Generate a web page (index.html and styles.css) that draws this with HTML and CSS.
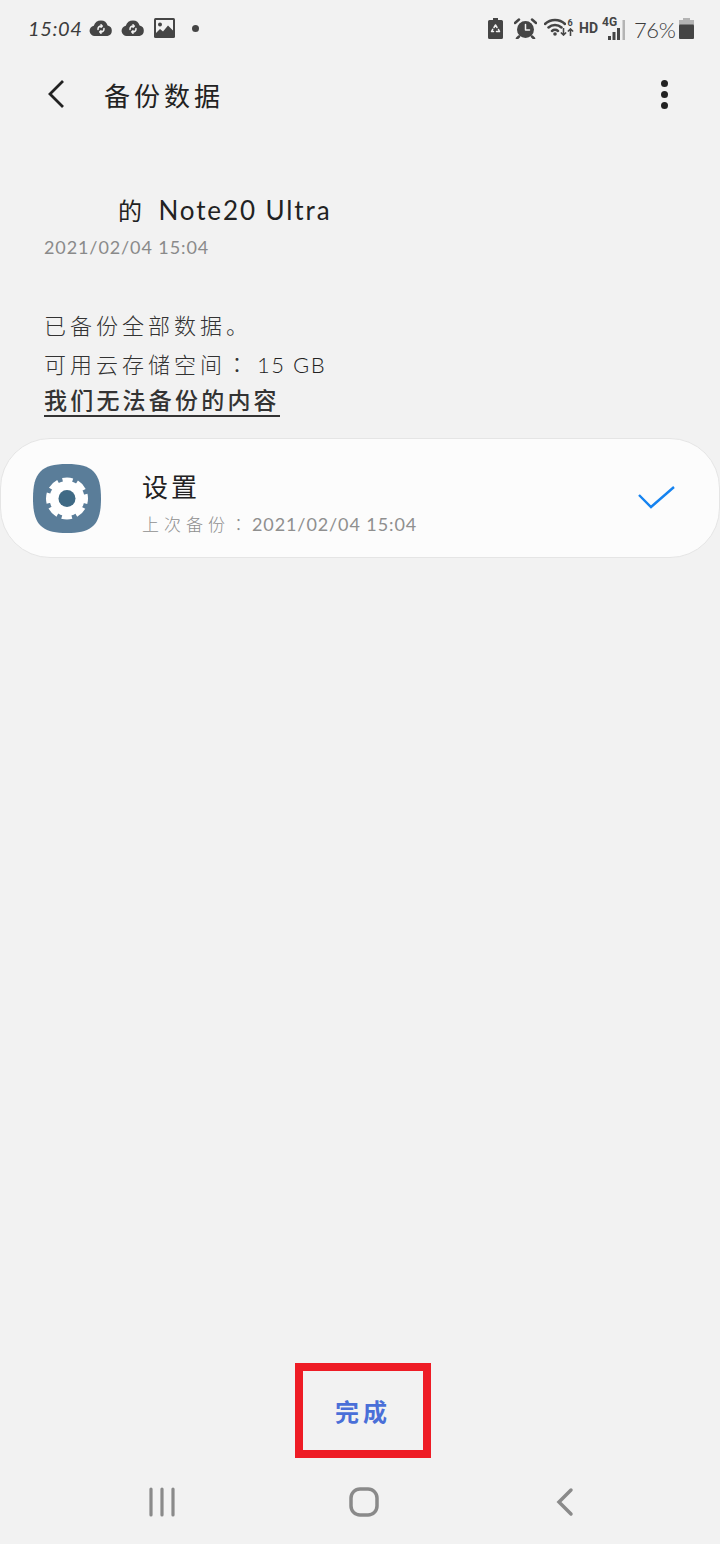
FILE: index.html
```html
<!DOCTYPE html>
<html lang="zh-CN">
<head>
<meta charset="utf-8">
<title>备份数据</title>
<link rel="stylesheet" href="styles.css">
</head>
<body>
<div class="screen">
  <header class="status">
    <div class="status-left">
      <span class="time">15:04</span>
      <svg class="ic-cloud" viewBox="0 0 24 16"><path class="f" d="M6 16a5.200 5.200 0 0 1-1.200-10.300A7.600 7.600 0 0 1 12 .4a7 7 0 0 1 6.600 5.200A5.300 5.300 0 0 1 18.500 16z"/><path class="w" d="M9 9.500a3 3 0 0 1 3.500-3.400M15 8.500a3 3 0 0 1-3.500 3.400M12 4.800l1.200 1.300-1.200 1.200M12 13.200l-1.200-1.300 1.200-1.200"/></svg>
      <svg class="ic-cloud" viewBox="0 0 24 16"><path class="f" d="M6 16a5.200 5.200 0 0 1-1.200-10.300A7.600 7.600 0 0 1 12 .4a7 7 0 0 1 6.600 5.200A5.300 5.300 0 0 1 18.500 16z"/><path class="w" d="M9 9.500a3 3 0 0 1 3.500-3.400M15 8.500a3 3 0 0 1-3.500 3.400M12 4.800l1.200 1.300-1.200 1.200M12 13.200l-1.200-1.300 1.200-1.200"/></svg>
      <svg class="ic-image" viewBox="0 0 21 20"><rect class="f" width="21" height="20" rx="1.500"/><rect class="bg" x="2" y="2" width="17" height="16"/><circle class="f" cx="6" cy="6.500" r="2"/><path class="f" d="M2 18v-3l4-4 3 2.500 5-6 5 5V18z"/></svg>
      <span class="dot"></span>
    </div>
    <div class="status-right">
      <svg class="ic-saver" viewBox="0 0 15 21"><path class="f" d="M5 0h5v2h3.500A1.500 1.500 0 0 1 15 3.500v16a1.500 1.500 0 0 1-1.500 1.500h-12A1.500 1.500 0 0 1 0 19.500v-16A1.500 1.500 0 0 1 1.500 2H5z"/><path class="w" d="M6 9.500l1.500-2.500 1.500 2.500M10.500 11.500l1 2h-3M5.500 13.500h-2l1.200-2.200"/></svg>
      <svg class="ic-alarm" viewBox="0 0 23 21"><circle class="f" cx="11.500" cy="11.500" r="8.500"/><path class="s" d="M1 5l4-3.500M22 5l-4-3.500M5 18.500l-2 2M18 18.500l2 2"/><path class="w" d="M11.500 6.500v5.500h4"/></svg>
      <div class="wifi">
        <svg class="ic-wifi" viewBox="0 0 22 19"><path class="s" d="M1 7a14.500 14.500 0 0 1 20 0M4.500 10.500a9.500 9.500 0 0 1 13 0M8 14a4.500 4.500 0 0 1 6 0"/><circle class="f" cx="11" cy="17" r="1.800"/></svg>
        <div class="wifi-side">
          <span class="wifi-num">6</span>
          <svg class="ic-arrows" viewBox="0 0 16 9"><path class="s2" d="M4 0v8M1 5l3 3 3-3M12 9V1M9 4l3-3 3 3"/></svg>
        </div>
      </div>
      <span class="hd">HD</span>
      <div class="net">
        <span class="net-label">4G</span>
        <svg class="ic-signal" viewBox="0 0 20 20"><path class="bars" d="M2 16h3v4H2zM6.500 12h3v8h-3zM11 8h3v12h-3z"/><rect class="bar-off" x="16.500" y="0" width="2.500" height="20"/></svg>
      </div>
      <span class="battery-text">76%</span>
      <svg class="ic-battery" viewBox="0 0 15 21"><rect class="off" x="4" width="7" height="3"/><rect class="off" y="2" width="15" height="5"/><rect class="f" y="6.500" width="15" height="14.500" rx="1"/></svg>
    </div>
  </header>

  <nav class="appbar">
    <svg class="ic-back" viewBox="0 0 18 30"><path d="M16 2 3 15l13 13"/></svg>
    <h1 class="title">备份数据</h1>
    <span class="more"><i></i><i></i><i></i></span>
  </nav>

  <section class="device">
    <div class="device-name"><span class="device-of">的</span> Note20 Ultra</div>
    <div class="device-date">2021/02/04 15:04</div>
  </section>

  <section class="info">
    <p class="info-line">已备份全部数据。</p>
    <p class="info-line">可用云存储空间<span class="tc" lang="zh-Hant">：</span><span class="amount">15 GB</span></p>
    <p class="info-link">我们无法备份的内容</p>
  </section>

  <section class="card">
    <svg class="app-icon" viewBox="0 0 68 69">
      <path class="squircle" d="M34 0C60 0 68 9 68 34.500 68 60 60 69 34 69 8 69 0 60 0 34.500 0 9 8 0 34 0z"/>
      <circle class="gear" cx="34" cy="34.500" r="17.500"/>
      <circle class="teeth" cx="34" cy="34.500" r="18.500"/>
      <circle class="hub" cx="34" cy="34.500" r="8.500"/>
    </svg>
    <div class="card-text">
      <div class="card-title">设置</div>
      <div class="card-sub"><span class="card-sub-label">上次备份<span class="tc" lang="zh-Hant">：</span></span>2021/02/04 15:04</div>
    </div>
    <svg class="ic-check" viewBox="0 0 38 25"><path d="M1 9l12 12L36 1"/></svg>
  </section>

  <div class="spacer"></div>

  <div class="done-row"><button class="done">完成</button></div>

  <footer class="navbar">
    <svg class="ic-recent" viewBox="0 0 26 30"><path d="M2 2v26M13 2v26M24 2v26"/></svg>
    <svg class="ic-home" viewBox="0 0 30 30"><rect x="2" y="2" width="26" height="26" rx="9"/></svg>
    <svg class="ic-navback" viewBox="0 0 18 30"><path d="M15 3 3 15l12 12"/></svg>
  </footer>
</div>
</body>
</html>
```
FILE: styles.css
```css
* { box-sizing: border-box; }
html, body { margin: 0; padding: 0; }
body {
  background: #f2f2f2;
  color: #222;
  font-family: "Lato", "Noto Sans CJK SC", sans-serif;
}
.screen { height: 1544px; display: flex; flex-direction: column; overflow: hidden; }
.tc { font-family: "Noto Sans CJK TC", sans-serif; }

.f { fill: #454545; }
.w { fill: none; stroke: #f2f2f2; stroke-width: 1.500; stroke-linecap: round; stroke-linejoin: round; }
.s { fill: none; stroke: #454545; stroke-width: 2.500; stroke-linecap: round; }
.s2 { fill: none; stroke: #454545; stroke-width: 1.800; }
.bg { fill: #f2f2f2; }
.off { fill: #b4b4b4; }

.status { height: 58px; padding: 0 26px 2px 28px; display: flex; justify-content: space-between; align-items: center; }
.status-left, .status-right { display: flex; align-items: center; }
.time { width: 52px; margin-right: 9px; font-size: 20px; font-style: italic; letter-spacing: 0.600px; color: #3c3c3c; }
.ic-cloud { width: 24px; height: 16px; margin-right: 8px; }
.ic-image { width: 21px; height: 20px; margin: 0 17px 0 1px; }
.dot { width: 7px; height: 7px; border-radius: 50%; background: #454545; }

.ic-saver { width: 15px; height: 21px; margin-right: 11px; }
.ic-alarm { width: 23px; height: 21px; margin-right: 7px; }
.wifi { display: flex; align-items: flex-end; width: 30px; height: 20px; margin: 0 5px 5px 0; }
.ic-wifi { width: 22px; height: 19px; }
.wifi-side { width: 8px; display: flex; flex-direction: column; align-items: center; }
.wifi-num { font: 700 9px/10px "Roboto", sans-serif; color: #454545; }
.ic-arrows { width: 14px; height: 8px; margin-left: -6px; flex: none; }
.hd { width: 18px; margin-right: 5px; font: 700 14px/1 "Roboto", sans-serif; color: #454545; }
.net { position: relative; width: 24px; height: 24px; margin-right: 8px; }
.net-label { position: absolute; left: 0; top: 0; font: 700 12px/12px "Roboto", sans-serif; color: #454545; }
.ic-signal { position: absolute; right: 0; bottom: 0; width: 20px; height: 20px; }
.bars { fill: #454545; }
.bar-off { fill: #b4b4b4; }
.battery-text { width: 42px; margin: 3px 3px 0 0; font-size: 22px; font-weight: 300; letter-spacing: -0.400px; color: #3c3c3c; white-space: nowrap; }
.ic-battery { width: 15px; height: 21px; }

.appbar { height: 72px; padding: 0 49px 0 47px; display: flex; align-items: center; }
.ic-back { width: 18px; height: 30px; fill: none; stroke: #222; stroke-width: 2.800; margin-right: 39px; flex: none; }
.title { margin: 0; flex: 1; font-size: 26px; font-weight: 400; letter-spacing: 4px; color: #222; }
.more { width: 14px; display: flex; flex-direction: column; align-items: center; gap: 4px; }
.more i { width: 7px; height: 7px; border-radius: 50%; background: #222; }

.device { padding: 60px 0 0 44px; }
.device-name { padding-left: 74px; font-size: 26px; line-height: 40px; letter-spacing: 1.900px; color: #222; white-space: nowrap; }
.device-of { font-size: 24px; margin-right: 6px; }
.device-date { margin-top: 3px; font-size: 18px; line-height: 26px; letter-spacing: 0.900px; color: #8a8a8a; }

.info { padding: 47px 0 0 44px; }
.info-line { margin: 0; font-size: 22px; line-height: 37.500px; letter-spacing: 4px; font-weight: 300; color: #333; }
.amount { margin-left: 5px; font-weight: 300; letter-spacing: 1.500px; color: #222; }
.info-link { display: inline-block; margin: 2px 0 0; font-size: 23px; line-height: 30px; letter-spacing: 3.200px; font-weight: 500; color: #333; border-bottom: 2px solid #333; }

.card {
  margin-top: 21px; height: 120px; padding: 0 43px 0 32px;
  display: flex; align-items: center;
  background: #fcfcfc; border: 1px solid #e5e5e5; border-radius: 50px;
}
.app-icon { width: 68px; height: 69px; margin-right: 41px; flex: none; }
.squircle { fill: #5a7d99; }
.gear { fill: #fff; }
.teeth { fill: none; stroke: #fff; stroke-width: 5; stroke-dasharray: 10 4.530; stroke-dashoffset: 5; }
.hub { fill: #3f6a85; }
.card-text { flex: 1; padding-top: 9px; }
.card-title { font-size: 26px; line-height: 36px; letter-spacing: 3px; color: #222; }
.card-sub { margin-top: 7px; font-size: 18px; line-height: 24px; letter-spacing: 0.900px; color: #8f8f8f; }
.card-sub-label { font-size: 17px; letter-spacing: 5px; font-weight: 300; }
.ic-check { width: 38px; height: 25px; fill: none; stroke: #1583f0; stroke-width: 2.400; flex: none; }

.spacer { flex: 1; }
.done-row { display: flex; justify-content: center; }
.done {
  width: 136px; height: 95px; margin-left: 6px; padding: 0;
  background: transparent; border: 8px solid #ee1c25; border-radius: 0;
  font-family: "Noto Sans CJK SC", sans-serif; font-size: 24px; font-weight: 700; letter-spacing: 4px; color: #4a6fd8;
}

.navbar { height: 86px; padding: 2px 0 0 149px; display: flex; align-items: center; }
.navbar svg { fill: none; stroke: #8a8a8a; stroke-linecap: round; flex: none; }
.ic-recent { width: 26px; height: 30px; stroke-width: 3.200; }
.ic-home { width: 30px; height: 30px; stroke-width: 3.500; margin-left: 174px; }
.ic-navback { width: 18px; height: 30px; stroke-width: 3.500; margin-left: 177px; }
```
